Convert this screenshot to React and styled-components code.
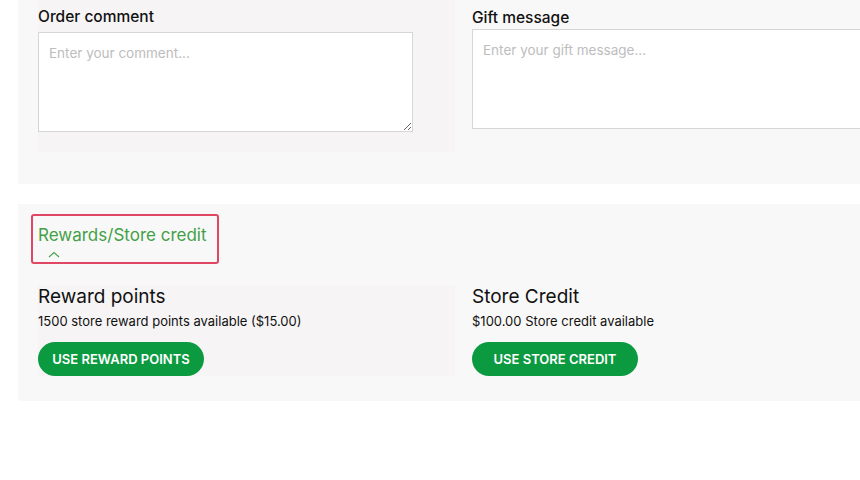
import styled, { createGlobalStyle } from "styled-components"

const GlobalStyle = createGlobalStyle`
  html, body {
    margin: 0;
    padding: 0;
    background: #ffffff;
    overflow: hidden;
  }
  body {
    font-family: "Inter", "Open Sans", sans-serif;
    color: #111111;
  }
`

const Page = styled.div`
  width: 1000px;
  padding: 0 0 0 18px;
  display: flex;
  flex-direction: column;
  gap: 20px;
`

const Section = styled.section`
  background: #f9f8f8;
  padding: ${(props) => props.$pad};
`

const Columns = styled.div`
  display: grid;
  grid-template-columns: 417px 417px;
`

const Column = styled.div`
  background: ${(props) => (props.$shaded ? "#f6f4f5" : "transparent")};
  padding: ${(props) => props.$pad};
`

const Label = styled.label`
  display: block;
  font-size: 15.5px;
  font-weight: 500;
  line-height: 18px;
  margin: 0 0 ${(props) => props.$gap}px;
`

const TextArea = styled.textarea`
  display: block;
  box-sizing: border-box;
  width: ${(props) => props.$width};
  height: 100px;
  border: 1px solid #d6d6d6;
  background: #ffffff;
  padding: 12px 10px;
  font-family: "Inter", "Open Sans", sans-serif;
  font-size: 13.5px;
  color: #222;
  outline: none;
  resize: ${(props) => (props.$resize ? "both" : "none")};
  &::placeholder {
    color: #bdbdbd;
  }
`

const ToggleBox = styled.button`
  display: flex;
  flex-direction: column;
  align-items: flex-start;
  width: 188px;
  height: 50px;
  box-sizing: border-box;
  margin: 0 0 21px -7px;
  padding: 9px 0 0 5px;
  border: 2px solid #e04763;
  border-radius: 3px;
  background: transparent;
  color: #43a047;
  cursor: pointer;
  font-family: "Inter", "Open Sans", sans-serif;
`

const ToggleText = styled.span`
  font-size: 17px;
  line-height: 20px;
`

const Chevron = styled.svg`
  margin: 6px 0 0 10px;
`

const CardTitle = styled.h3`
  margin: 0;
  font-size: 19px;
  font-weight: 400;
  line-height: 20px;
`

const CardText = styled.p`
  margin: 6px 0 12px;
  font-size: 13px;
  line-height: 17px;
`

const GreenButton = styled.button`
  display: block;
  height: 34px;
  width: ${(props) => props.$width}px;
  border: none;
  border-radius: 17px;
  background: #0b9a40;
  color: #ffffff;
  font-family: "Inter", "Roboto", sans-serif;
  font-weight: 600;
  font-size: 13px;
  text-transform: uppercase;
  cursor: pointer;
  padding: 0;
`

const App = () => {
  return (
    <>
      <GlobalStyle />
      <Page>
        <Section $pad="0 0 32px 20px">
          <Columns>
            <Column $shaded $pad="8px 0 20px 0">
              <Label $gap={6}>Order comment</Label>
              <TextArea $width="375px" $resize placeholder="Enter your comment..." />
            </Column>
            <Column $pad="9px 0 0 17px">
              <Label $gap={2}>Gift message</Label>
              <TextArea $width="420px" placeholder="Enter your gift message..." />
            </Column>
          </Columns>
        </Section>
        <Section $pad="10px 0 25px 20px">
          <ToggleBox type="button">
            <ToggleText>Rewards/Store credit</ToggleText>
            <Chevron width="12" height="7" viewBox="0 0 12 7" fill="none">
              <path d="M1 6 L6 1.5 L11 6" stroke="#43a047" strokeWidth="1.1" />
            </Chevron>
          </ToggleBox>
          <Columns>
            <Column $shaded $pad="2px 0 0 0">
              <CardTitle>Reward points</CardTitle>
              <CardText>1500 store reward points available ($15.00)</CardText>
              <GreenButton $width={166}>Use reward points</GreenButton>
            </Column>
            <Column $pad="2px 0 0 17px">
              <CardTitle>Store Credit</CardTitle>
              <CardText>$100.00 Store credit available</CardText>
              <GreenButton $width={166}>Use store credit</GreenButton>
            </Column>
          </Columns>
        </Section>
      </Page>
    </>
  )
}

export default App
